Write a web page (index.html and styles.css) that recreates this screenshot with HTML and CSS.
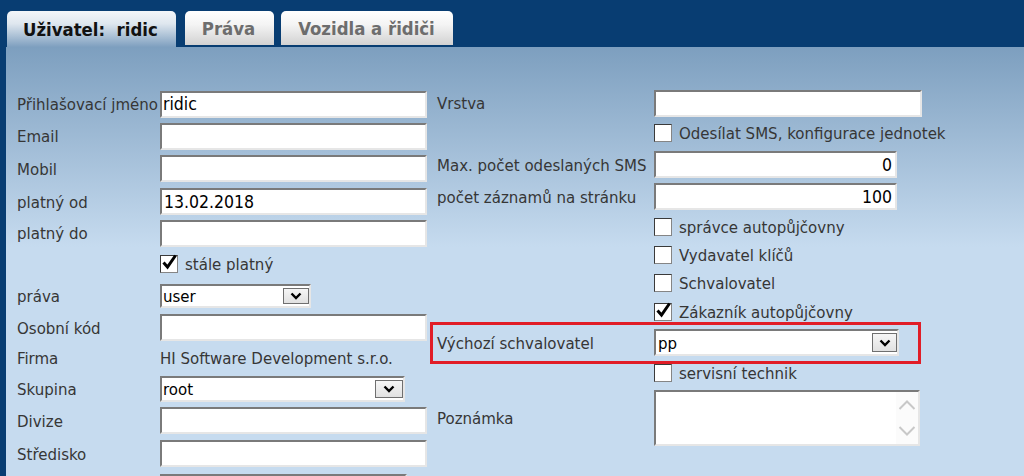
FILE: index.html
```html
<!DOCTYPE html>
<html lang="cs">
<head>
  <meta charset="UTF-8">
  <title>Uživatel: ridic</title>
  <link rel="stylesheet" href="styles.css">
</head>
<body>
  <div class="tabbar">
    <div class="tab active">Uživatel:&nbsp; ridic</div>
    <div class="tab">Práva</div>
    <div class="tab">Vozidla a řidiči</div>
  </div>

  <div class="panel">
    <!-- levý sloupec -->
    <div class="lcol">
      <span class="lbl">Přihlašovací jméno</span>
      <input class="inp" type="text" value="ridic">

      <span class="lbl">Email</span>
      <input class="inp" type="text" value="">

      <span class="lbl">Mobil</span>
      <input class="inp" type="text" value="">

      <span class="lbl">platný od</span>
      <input class="inp date" type="text" value="13.02.2018">

      <span class="lbl">platný do</span>
      <input class="inp" type="text" value="">

      <span></span>
      <div class="cbrow">
        <span class="cb"><svg viewBox="0 0 18 18" width="18" height="18"><path d="M3.5 8.5 L7.5 13 L15.5 1.5" fill="none" stroke="#000" stroke-width="3"/></svg></span>
        <span>stále platný</span>
      </div>

      <span class="lbl">práva</span>
      <div class="sel sel-prava">
        <span class="val">user</span>
        <span class="btn"><svg viewBox="0 0 12 8" width="12" height="8"><polyline points="1.5,1.5 6,6 10.5,1.5" fill="none" stroke="#000" stroke-width="2.4"/></svg></span>
      </div>

      <span class="lbl">Osobní kód</span>
      <input class="inp" type="text" value="">

      <span class="lbl">Firma</span>
      <span class="plain">HI Software Development s.r.o.</span>

      <span class="lbl">Skupina</span>
      <div class="sel sel-skupina">
        <span class="val">root</span>
        <span class="btn"><svg viewBox="0 0 12 8" width="12" height="8"><polyline points="1.5,1.5 6,6 10.5,1.5" fill="none" stroke="#000" stroke-width="2.4"/></svg></span>
      </div>

      <span class="lbl">Divize</span>
      <input class="inp" type="text" value="">

      <span class="lbl">Středisko</span>
      <input class="inp" type="text" value="">

      <span class="lbl"></span>
      <div class="sel sel-jazyk">
        <span class="val"></span>
      </div>
    </div>

    <!-- pravý sloupec -->
    <div class="rcol">
      <div class="rrow">
        <span class="lbl">Vrstva</span>
        <input class="inp" type="text" value="">
      </div>
      <div class="rrow only">
        <span class="cb"></span>
        <span>Odesílat SMS, konfigurace jednotek</span>
      </div>
      <div class="rrow">
        <span class="lbl">Max. počet odeslaných SMS</span>
        <input class="inp num" type="text" value="0">
      </div>
      <div class="rrow">
        <span class="lbl">počet záznamů na stránku</span>
        <input class="inp num" type="text" value="100">
      </div>
      <div class="rrow only">
        <span class="cb"></span>
        <span>správce autopůjčovny</span>
      </div>
      <div class="rrow only">
        <span class="cb"></span>
        <span>Vydavatel klíčů</span>
      </div>
      <div class="rrow only">
        <span class="cb"></span>
        <span>Schvalovatel</span>
      </div>
      <div class="rrow only">
        <span class="cb"><svg viewBox="0 0 18 18" width="18" height="18"><path d="M3.5 8.5 L7.5 13 L15.5 1.5" fill="none" stroke="#000" stroke-width="3"/></svg></span>
        <span>Zákazník autopůjčovny</span>
      </div>
      <div class="rrow marked">
        <span class="lbl">Výchozí schvalovatel</span>
        <div class="sel sel-schval">
          <span class="val">pp</span>
          <span class="btn"><svg viewBox="0 0 12 8" width="12" height="8"><polyline points="1.5,1.5 6,6 10.5,1.5" fill="none" stroke="#000" stroke-width="2.4"/></svg></span>
        </div>
      </div>
      <div class="rrow only">
        <span class="cb"></span>
        <span>servisní technik</span>
      </div>
      <div class="rrow">
        <span class="lbl">Poznámka</span>
        <div class="memo">
          <div class="sb">
            <svg viewBox="0 0 18 12" width="18" height="12"><polyline points="1.5,10 9,2.5 16.5,10" fill="none" stroke="#c8c8c8" stroke-width="2"/></svg>
            <svg viewBox="0 0 18 12" width="18" height="12"><polyline points="1.5,2 9,9.5 16.5,2" fill="none" stroke="#c8c8c8" stroke-width="2"/></svg>
          </div>
        </div>
      </div>
    </div>
  </div>
</body>
</html>
```

FILE: styles.css
```css
html, body { margin: 0; height: 100%; overflow: hidden; }
body { font-family: "DejaVu Sans Condensed", "DejaVu Sans", sans-serif; font-stretch: condensed; font-size: 16.7px; color: #363636; background: #083d72; }

.tabbar { height: 47px; box-sizing: border-box; display: flex; align-items: flex-end; gap: 9px; padding-left: 7px; background: #083d72; }
.tab { height: 34px; margin-bottom: 2px; padding: 0 18px 0 17px; display: flex; align-items: center; border-radius: 5px 5px 0 0; background: linear-gradient(#ffffff, #f4f4f4 40%, #d2d2d2); font-size: 18.4px; font-weight: bold; color: #6d6d6d; white-space: nowrap; }
.tab + .tab { padding-right: 19px; }
.tab + .tab + .tab { margin-left: -2px; padding-right: 18px; }
.tab.active { height: 36px; margin-bottom: 0; padding: 0 18px 0 16px; background: linear-gradient(#f3f6f9, #dfe7ef 35%, #7e9fbf); color: #111; }

.panel { height: calc(100% - 47px); box-sizing: border-box; border-left: 6px solid #083d72; padding: 41px 0 0 11px; display: flex; gap: 10px; background: linear-gradient(#7d9fbf, #c6dbef 200px, #c6dbef); }

.lcol { display: grid; grid-template-columns: 143px 267px; grid-template-rows: 32px 32px 33px 33px 30px 31px 33px 31px 30px 31px 33px 33px 33px; align-items: center; }
.rcol { display: grid; grid-template-columns: 485px; grid-template-rows: 30px 30px 33px 31px 29px 28px 28px 30px 31px 30px 60px; }
.rrow { display: flex; align-items: center; position: relative; white-space: nowrap; min-width: 0; }
.rrow .lbl { width: 217px; flex: none; }
.rrow.only { padding-left: 217px; }
.rrow.only .cb { margin-right: 7px; }

.lbl { white-space: nowrap; }
.plain { white-space: nowrap; }

.inp { height: 27px; width: 100%; box-sizing: border-box; margin: 0; padding: 0 2px 0 1px; border: 2px solid; border-color: #7a7a7a #e6e6e6 #e6e6e6 #7a7a7a; background: #fff; font: inherit; font-size: 17.5px; color: #000; outline: none; }
.rrow .inp { width: 268px; }
.rrow .inp.num { width: 243px; text-align: right; padding-right: 3px; }
.inp.date { padding-left: 2px; }

.cbrow { display: flex; align-items: center; gap: 7px; }
.cb { width: 18px; height: 18px; flex: none; box-sizing: border-box; border: 1px solid; border-color: #3a3a3a #858585 #858585 #3a3a3a; background: #fff; position: relative; }
.cb svg { position: absolute; left: -1px; top: -2px; }

.sel { display: flex; align-items: center; box-sizing: border-box; border: 2px solid; border-color: #7a7a7a #e6e6e6 #e6e6e6 #7a7a7a; background: #fff; color: #000; }
.sel .val { flex: 1; padding-left: 1px; white-space: nowrap; }
.sel .btn { height: calc(100% - 4px); width: 26px; box-sizing: border-box; display: flex; align-items: center; justify-content: center; border: 1px solid #6f6f6f; background: linear-gradient(#f6f6f6, #e1e1e1); }
.sel-prava { width: 151px; height: 24px; }
.sel-skupina { width: 245px; height: 26px; }
.sel-skupina .btn { width: 28px; }
.sel-jazyk { width: 247px; height: 26px; }
.sel-schval { width: 245px; height: 27px; }
.sel-schval .btn { width: 25px; }
.sel-schval .val { padding-left: 2px; }

.marked::after { content: ""; position: absolute; top: -5px; bottom: -6px; left: -7px; right: 1px; border: 3px solid #e11d27; pointer-events: none; }

.memo { width: 266px; height: 56px; box-sizing: border-box; border: 2px solid; border-color: #7a7a7a #e6e6e6 #e6e6e6 #7a7a7a; background: #fff; display: flex; justify-content: flex-end; }
.memo .sb { width: 22px; display: flex; flex-direction: column; justify-content: space-around; align-items: center; background: #fbfbfb; }
```
